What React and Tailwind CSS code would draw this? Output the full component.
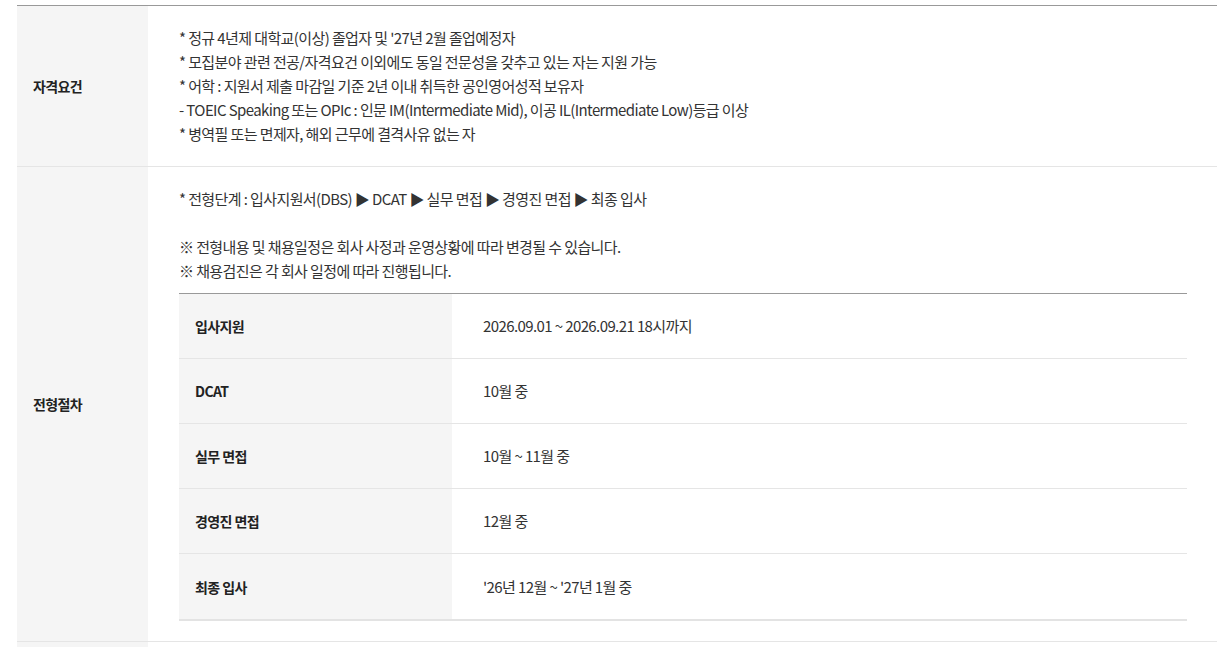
import React from 'react';

const qualifications = [
  "* 정규 4년제 대학교(이상) 졸업자 및 '27년 2월 졸업예정자",
  '* 모집분야 관련 전공/자격요건 이외에도 동일 전문성을 갖추고 있는 자는 지원 가능',
  '* 어학 : 지원서 제출 마감일 기준 2년 이내 취득한 공인영어성적 보유자',
  '- TOEIC Speaking 또는 OPIc : 인문 IM(Intermediate Mid), 이공 IL(Intermediate Low)등급 이상',
  '* 병역필 또는 면제자, 해외 근무에 결격사유 없는 자',
];

const schedule = [
  { step: '입사지원', date: '2026.09.01 ~ 2026.09.21 18시까지' },
  { step: 'DCAT', date: '10월 중' },
  { step: '실무 면접', date: '10월 ~ 11월 중' },
  { step: '경영진 면접', date: '12월 중' },
  { step: '최종 입사', date: "'26년 12월 ~ '27년 1월 중" },
];

const Row = ({ label, children }) => (
  <div className="flex border-b border-[#e5e5e5]">
    <div className="w-[131px] shrink-0 bg-[#f5f5f5] flex items-center pl-4 text-[14px] font-bold text-[#222]">
      {label}
    </div>
    <div className="flex-1 pl-[31px] pr-[30px] py-5">{children}</div>
  </div>
);

const App = () => {
  return (
    <div
      className="bg-white min-h-screen pt-[5px] px-[13px] text-[15px] leading-6 text-[#333] tracking-[-0.04em]"
      style={{ fontFamily: '"Noto Sans CJK KR", "Noto Sans", sans-serif' }}
    >
      <div className="ml-1 w-[1200px] border-t border-[#999]">
        {/* 자격요건 */}
        <Row label="자격요건">
          {qualifications.map((line) => (
            <p key={line}>{line}</p>
          ))}
        </Row>

        {/* 전형절차 */}
        <Row label="전형절차">
          <p>* 전형단계 : 입사지원서(DBS) ▶ DCAT ▶ 실무 면접 ▶ 경영진 면접 ▶ 최종 입사</p>
          <p>&nbsp;</p>
          <p>※ 전형내용 및 채용일정은 회사 사정과 운영상황에 따라 변경될 수 있습니다.</p>
          <p>※ 채용검진은 각 회사 일정에 따라 진행됩니다.</p>

          <div className="mt-[10px] border-t border-[#999] border-b-2 border-b-[#e3e3e3]">
            {schedule.map((item, i) => (
              <div
                key={item.step}
                className={`flex h-[65px] ${i < schedule.length - 1 ? 'border-b border-[#e5e5e5]' : ''}`}
              >
                <div className="w-[273px] bg-[#f5f5f5] flex items-center pl-4 text-[14px] font-bold text-[#222]">
                  {item.step}
                </div>
                <div className="flex-1 flex items-center pl-[31px]">{item.date}</div>
              </div>
            ))}
          </div>
        </Row>

        <div className="flex h-6">
          <div className="w-[131px] bg-[#f5f5f5]" />
        </div>
      </div>
    </div>
  );
};

export default App;
